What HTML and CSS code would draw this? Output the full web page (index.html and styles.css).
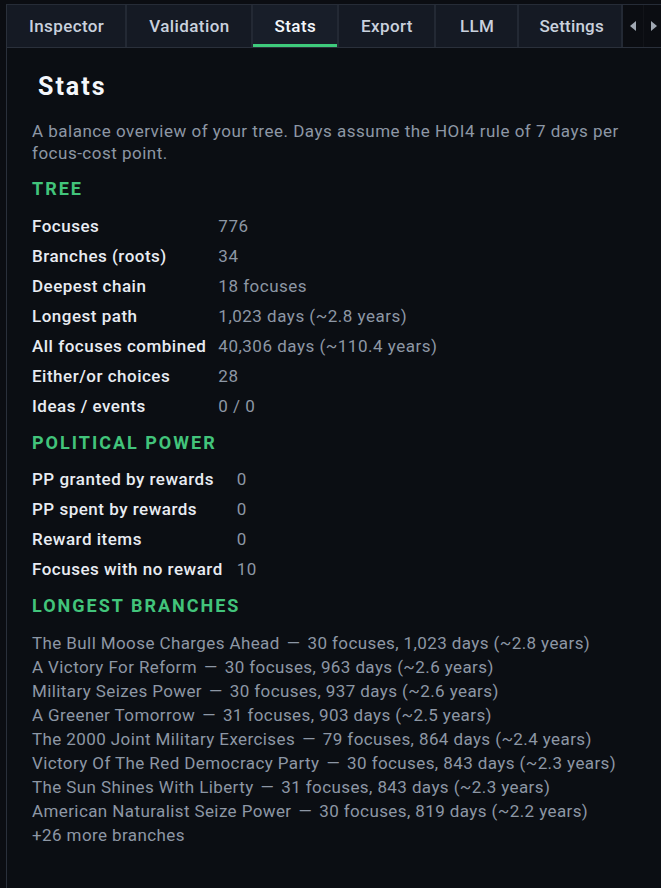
FILE: index.html
```html
<!DOCTYPE html>
<html>
<head>
<meta charset="utf-8">
<link rel="stylesheet" href="styles.css">
</head>
<body>
<div class="app">
  <nav class="tabs">
    <div class="tab">Inspector</div>
    <div class="tab">Validation</div>
    <div class="tab active">Stats</div>
    <div class="tab">Export</div>
    <div class="tab tab-llm">LLM</div>
    <div class="tab tab-settings">Settings</div>
    <div class="scroller">
      <span class="arrow-btn"><span class="arrow left"></span></span>
      <span class="arrow-btn"><span class="arrow right"></span></span>
    </div>
  </nav>
  <main class="panel">
    <h2 class="title">Stats</h2>
    <p class="desc">A balance overview of your tree. Days assume the HOI4 rule of 7 days per focus-cost point.</p>

    <h3 class="section first">TREE</h3>
    <dl class="grid">
      <dt>Focuses</dt><dd>776</dd>
      <dt>Branches (roots)</dt><dd>34</dd>
      <dt>Deepest chain</dt><dd>18 focuses</dd>
      <dt>Longest path</dt><dd>1,023 days (~2.8 years)</dd>
      <dt>All focuses combined</dt><dd>40,306 days (~110.4 years)</dd>
      <dt>Either/or choices</dt><dd>28</dd>
      <dt>Ideas / events</dt><dd>0 / 0</dd>
    </dl>

    <h3 class="section">POLITICAL POWER</h3>
    <dl class="grid later">
      <dt>PP granted by rewards</dt><dd>0</dd>
      <dt>PP spent by rewards</dt><dd>0</dd>
      <dt>Reward items</dt><dd>0</dd>
      <dt>Focuses with no reward</dt><dd>10</dd>
    </dl>

    <h3 class="section">LONGEST BRANCHES</h3>
    <ul class="branches">
      <li>The Bull Moose Charges Ahead<span class="dash">—</span>30 focuses, 1,023 days (~2.8 years)</li>
      <li>A Victory For Reform<span class="dash">—</span>30 focuses, 963 days (~2.6 years)</li>
      <li>Military Seizes Power<span class="dash">—</span>30 focuses, 937 days (~2.6 years)</li>
      <li>A Greener Tomorrow<span class="dash">—</span>31 focuses, 903 days (~2.5 years)</li>
      <li>The 2000 Joint Military Exercises<span class="dash">—</span>79 focuses, 864 days (~2.4 years)</li>
      <li>Victory Of The Red Democracy Party<span class="dash">—</span>30 focuses, 843 days (~2.3 years)</li>
      <li>The Sun Shines With Liberty<span class="dash">—</span>31 focuses, 843 days (~2.3 years)</li>
      <li>American Naturalist Seize Power<span class="dash">—</span>30 focuses, 819 days (~2.2 years)</li>
      <li>+26 more branches</li>
    </ul>
  </main>
</div>
</body>
</html>
```

FILE: styles.css
```css
html, body {
  margin: 0;
  padding: 0;
  background: #0b0d12;
  height: 100%;
}
body {
  font-family: Roboto, "Liberation Sans", sans-serif;
  font-size: 17px;
  letter-spacing: 0.5px;
  color: #e6eaf0;
  overflow: hidden;
}
.app {
  margin: 4px 0 0 6px;
  border-top: 1px solid #262c37;
  border-left: 1px solid #2a303b;
  height: calc(100% - 5px);
  background: #0b0e13;
}
.tabs {
  display: flex;
  height: 42px;
  border-bottom: 1px solid #2a303b;
  background: #0c0e13;
}
.tab {
  display: flex;
  align-items: center;
  padding: 0 21px 0 22px;
  background: #151a24;
  border-right: 2px solid #232934;
  color: #c9d1dd;
  font-weight: 500;
  font-size: 17px;
  letter-spacing: 0.4px;
  white-space: nowrap;
  box-sizing: border-box;
}
.tab.tab-llm {
  padding: 0 23px 0 24px;
}
.tab.tab-settings {
  padding: 0 17px 0 20px;
  letter-spacing: 0.2px;
}
.tab.active {
  color: #f4f7fb;
  background: #181e29;
  box-shadow: inset 0 -3px 0 #3ecb7c;
}
.scroller {
  display: flex;
  align-items: stretch;
  background: #0b0d12;
  flex: 1;
}
.arrow-btn {
  display: flex;
  align-items: center;
  justify-content: center;
  width: 20px;
}
.arrow-btn + .arrow-btn {
  border-left: 1px solid #121419;
}
.arrow {
  width: 0;
  height: 0;
  border-top: 5px solid transparent;
  border-bottom: 5px solid transparent;
}
.arrow.left { border-right: 6px solid #9fa7b2; }
.arrow.right { border-left: 6px solid #9fa7b2; }
.panel {
  padding: 10px 24px 0 25px;
}
.title {
  margin: 0 0 0 6px;
  font-size: 25px;
  font-weight: 700;
  color: #f4f7fb;
  letter-spacing: 2px;
  line-height: 34px;
  padding-top: 12px;
}
.desc {
  margin: 16px 0 0 0;
  color: #8d97a5;
  line-height: 22px;
}
.section {
  margin: 9px 0 0 0;
  color: #42c47b;
  font-size: 18px;
  font-weight: 700;
  letter-spacing: 2px;
  line-height: 26px;
}
.section.first {
  margin-top: 12px;
}
.grid {
  display: grid;
  grid-template-columns: max-content 1fr;
  column-gap: 12px;
  margin: 9px 0 0 0;
}
.grid.later {
  margin-top: 8px;
  column-gap: 14px;
}
.grid dt {
  color: #e8ecf2;
  font-weight: 500;
  line-height: 30px;
}
.grid dd {
  margin: 0;
  color: #8d97a5;
  line-height: 30px;
}
.branches {
  list-style: none;
  margin: 12px 0 0 0;
  padding: 0;
  color: #8d97a5;
  letter-spacing: 0.4px;
}
.branches li {
  line-height: 24px;
}
.dash {
  margin: 0 7px;
}
```
